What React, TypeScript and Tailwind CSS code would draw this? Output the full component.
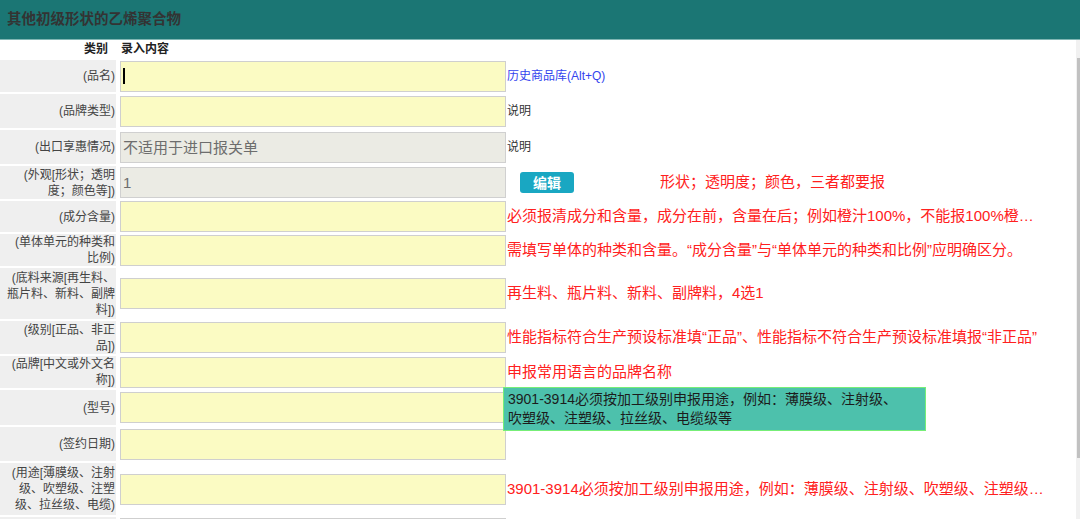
import React from 'react';

type Row = {
  label: React.ReactNode;
  h: string;
  kind?: 'input' | 'disabled';
  value?: string;
  caret?: boolean;
  note?: React.ReactNode;
  extra?: 'edit' | 'tip';
};

const red = 'text-[#ff2020] text-[15px] whitespace-nowrap overflow-hidden text-ellipsis';

const rows: Row[] = [
  {
    label: '(品名)',
    h: 'h-[32px]',
    caret: true,
    note: <span className="text-[#3344ee] text-[12px]">历史商品库(Alt+Q)</span>,
  },
  { label: '(品牌类型)', h: 'h-[34px]', note: <span className="text-[#333] text-[12px]">说明</span> },
  {
    label: '(出口享惠情况)',
    h: 'h-[34px]',
    kind: 'disabled',
    value: '不适用于进口报关单',
    note: <span className="text-[#333] text-[12px]">说明</span>,
  },
  {
    label: (
      <>
        (外观[形状；透明
        <br />
        度；颜色等])
      </>
    ),
    h: 'h-[33px]',
    kind: 'disabled',
    value: '1',
    extra: 'edit',
  },
  {
    label: '(成分含量)',
    h: 'h-[31px]',
    note: (
      <span className={red}>
        必须报清成分和含量，成分在前，含量在后；例如橙汁100%，不能报100%橙汁成分含量的写法
      </span>
    ),
  },
  {
    label: (
      <>
        (单体单元的种类和
        <br />
        比例)
      </>
    ),
    h: 'h-[32px]',
    note: <span className={red}>需填写单体的种类和含量。“成分含量”与“单体单元的种类和比例”应明确区分。</span>,
  },
  {
    label: (
      <>
        (底料来源[再生料、
        <br />
        瓶片料、新料、副牌
        <br />
        料])
      </>
    ),
    h: 'h-[51px]',
    note: <span className={red}>再生料、瓶片料、新料、副牌料，4选1</span>,
  },
  {
    label: (
      <>
        (级别[正品、非正
        <br />
        品])
      </>
    ),
    h: 'h-[33px]',
    note: <span className={red}>性能指标符合生产预设标准填“正品”、性能指标不符合生产预设标准填报“非正品”</span>,
  },
  {
    label: (
      <>
        (品牌[中文或外文名
        <br />
        称])
      </>
    ),
    h: 'h-[32px]',
    note: <span className={red}>申报常用语言的品牌名称</span>,
  },
  { label: '(型号)', h: 'h-[35px]', extra: 'tip' },
  { label: '(签约日期)', h: 'h-[34px]' },
  {
    label: (
      <>
        (用途[薄膜级、注射
        <br />
        级、吹塑级、注塑
        <br />
        级、拉丝级、电缆)
      </>
    ),
    h: 'h-[52px]',
    note: (
      <span className={red}>
        3901-3914必须按加工级别申报用途，例如：薄膜级、注射级、吹塑级、注塑级、拉丝级、电缆级等
      </span>
    ),
  },
  { label: '', h: 'h-[32px]' },
];

function FieldRow({ row }: { row: Row }) {
  const disabled = row.kind === 'disabled';
  return (
    <div className={`relative flex items-stretch shrink-0 ${row.h}`}>
      <div className="w-[116px] shrink-0 bg-[#efefef] flex items-center justify-end text-right pr-[1px] text-[12px] leading-[16px] text-[#444]">
        <span>{row.label}</span>
      </div>
      <div className="w-[386px] shrink-0 ml-[4px] flex items-center">
        <div
          className={`w-full h-[31px] border flex items-center px-[2px] ${
            disabled
              ? 'bg-[#ebebe4] border-[#d0d0d0] text-[#6d6d6d]'
              : 'bg-[#fbfbc3] border-[#cfcfcf]'
          }`}
        >
          {row.caret && <span className="block w-[2px] h-[16px] bg-black" />}
          {row.value && <span className="text-[15px] leading-none">{row.value}</span>}
        </div>
      </div>
      <div className="flex-1 min-w-0 flex items-center pl-[1px] pr-[30px]">
        {row.extra === 'edit' ? (
          <div className="flex items-center">
            <button className="ml-[13px] w-[54px] h-[21px] rounded-[3px] bg-[#19a7c2] text-white text-[14px] font-bold leading-none">
              编辑
            </button>
            <span className="ml-[86px] text-[#ff2020] text-[15px] whitespace-nowrap">形状；透明度；颜色，三者都要报</span>
          </div>
        ) : (
          row.note
        )}
      </div>
      {row.extra === 'tip' && (
        <div className="absolute left-[503px] top-[-3px] w-[423px] h-[44px] bg-[#4dc1ac] border border-[#77ee77] px-[4px] py-[2px] text-[14px] leading-[19px] text-[#1c1c1c] z-10">
          3901-3914必须按加工级别申报用途，例如：薄膜级、注射级、
          <br />
          吹塑级、注塑级、拉丝级、电缆级等
        </div>
      )}
    </div>
  );
}

export default function App() {
  return (
    <div className="w-[1080px] h-[519px] overflow-hidden bg-white flex flex-col font-['Liberation_Sans','Noto_Sans_CJK_SC',sans-serif]">
      <div className="h-[40px] shrink-0 bg-[#1b7674] border-b border-[#7fb6b3] flex items-center pl-[7px]">
        <h1 className="text-[14.5px] font-bold text-[#333]">其他初级形状的乙烯聚合物</h1>
      </div>
      <div className="flex flex-1 min-h-0">
        <div className="flex-1 flex flex-col gap-[2px] overflow-hidden">
          <div className="h-[18px] shrink-0 flex items-center text-[12px] font-bold text-[#222]">
            <div className="w-[116px] text-right pr-[8px]">类别</div>
            <div className="ml-[5px]">录入内容</div>
          </div>
          {rows.map((r, i) => (
            <FieldRow key={i} row={r} />
          ))}
        </div>
        <div className="w-[4px] shrink-0 bg-[#f1f1f1] flex flex-col items-end">
          <div className="mt-[18px] w-[3px] h-[400px] bg-[#c1c1c1]" />
        </div>
      </div>
    </div>
  );
}
